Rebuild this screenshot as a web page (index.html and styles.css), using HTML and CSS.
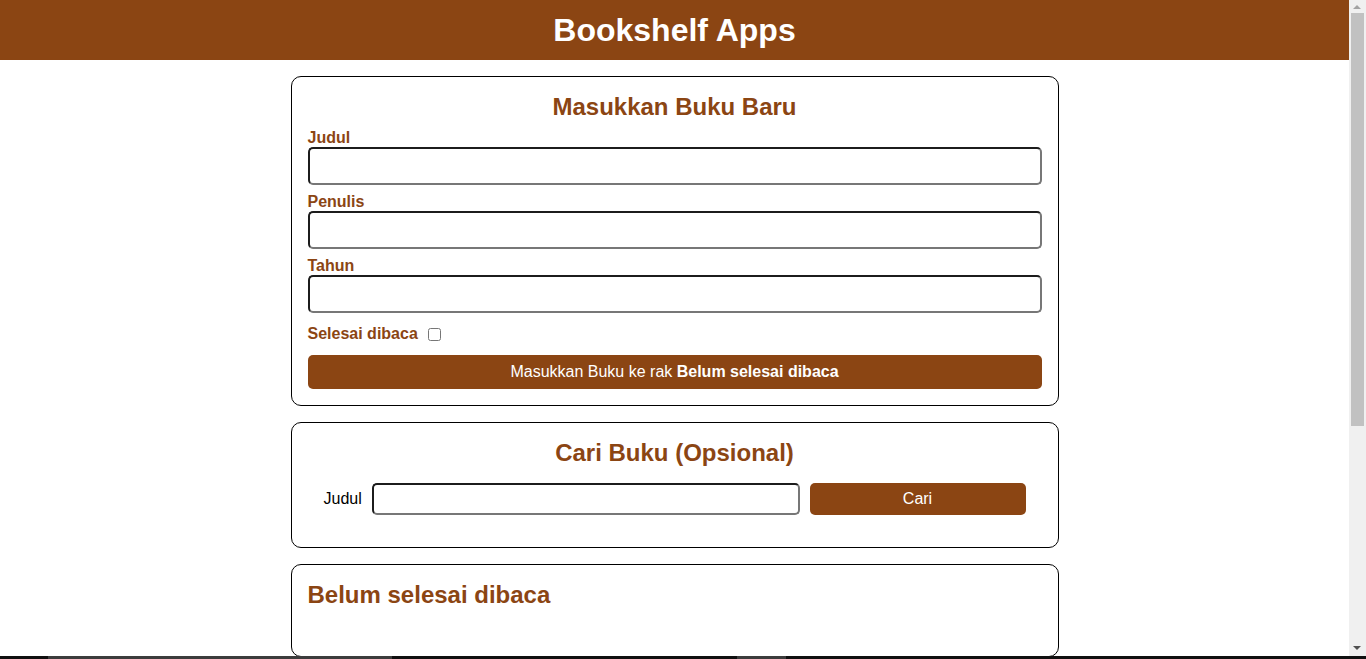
FILE: index.html
```html
<!DOCTYPE html>
<html lang="id">
<head>
<meta charset="utf-8">
<title>Bookshelf Apps</title>
<link rel="stylesheet" href="styles.css">
</head>
<body>
<div class="page">
  <header class="app-header">
    <h1>Bookshelf Apps</h1>
  </header>
  <main class="main">
    <section class="card input-section">
      <h2 class="card-title centered">Masukkan Buku Baru</h2>
      <form class="book-form">
        <div class="field">
          <label class="field-label" for="inputBookTitle">Judul</label>
          <input class="text-input" id="inputBookTitle" type="text">
        </div>
        <div class="field">
          <label class="field-label" for="inputBookAuthor">Penulis</label>
          <input class="text-input" id="inputBookAuthor" type="text">
        </div>
        <div class="field">
          <label class="field-label" for="inputBookYear">Tahun</label>
          <input class="text-input" id="inputBookYear" type="text">
        </div>
        <div class="check-row">
          <label class="field-label" for="inputBookIsComplete">Selesai dibaca</label>
          <input class="check" id="inputBookIsComplete" type="checkbox">
        </div>
        <button class="btn btn-submit" type="button">Masukkan Buku ke rak <strong>Belum selesai dibaca</strong></button>
      </form>
    </section>

    <section class="card search-section">
      <h2 class="card-title centered">Cari Buku (Opsional)</h2>
      <form class="search-form">
        <label class="search-label" for="searchBookTitle">Judul</label>
        <input class="text-input search-input" id="searchBookTitle" type="text">
        <button class="btn btn-search" type="button">Cari</button>
      </form>
    </section>

    <section class="card shelf">
      <h2 class="card-title">Belum selesai dibaca</h2>
      <div class="book-list"></div>
    </section>
  </main>
</div>
<div class="fake-scrollbar">
  <div class="sb-arrow sb-up"></div>
  <div class="sb-thumb"></div>
  <div class="sb-arrow sb-down"></div>
</div>
<div class="taskbar">
  <div class="tb-seg tb-dark" style="width:48px"></div>
  <div class="tb-seg tb-gray" style="width:344px"></div>
  <div class="tb-seg tb-dark" style="width:345px"></div>
  <div class="tb-seg tb-gray" style="width:49px"></div>
  <div class="tb-seg tb-dark tb-fill"></div>
</div>
</body>
</html>
```

FILE: styles.css
```css
html, body {
  margin: 0;
  padding: 0;
  height: 100%;
  overflow: hidden;
}

body {
  font-family: "Liberation Sans", Arial, sans-serif;
  background: #ffffff;
  color: #000;
}

.page {
  margin-right: 17px;
}

.app-header {
  background: #8b4513;
  color: #fff;
  text-align: center;
  height: 60px;
}

.app-header h1 {
  margin: 0;
  font-size: 32px;
  line-height: 60px;
  font-weight: bold;
}

.main {
  padding-top: 16px;
}

.card {
  width: 734px;
  margin: 0 auto 16px;
  border: 1px solid #000;
  border-radius: 10px;
  padding: 16px;
}

.card-title {
  margin: 0 0 8px;
  font-size: 24px;
  line-height: 28px;
  font-weight: bold;
  color: #8b4513;
}

.centered {
  text-align: center;
}

.field {
  display: flex;
  flex-direction: column;
  margin-bottom: 8px;
}

.field-label {
  font-size: 16px;
  line-height: 18px;
  font-weight: bold;
  color: #8b4513;
}

.text-input {
  box-sizing: border-box;
  height: 38px;
  border-width: 2px;
  border-style: solid;
  border-color: #1c1c1c #777777 #777777 #1c1c1c;
  border-radius: 5px;
  padding: 0 8px;
  font-family: inherit;
  font-size: 16px;
  background: #fff;
  margin: 0;
}

.check-row {
  display: flex;
  align-items: center;
  height: 26px;
  margin-bottom: 8px;
}

.check {
  width: 13px;
  height: 13px;
  margin: 0 0 0 10px;
}

.btn {
  display: block;
  box-sizing: border-box;
  border: none;
  border-radius: 5px;
  background: #8b4513;
  color: #fff;
  font-family: inherit;
  font-size: 16px;
  cursor: pointer;
}

.btn-submit {
  width: 100%;
  height: 34px;
}

.search-section .card-title {
  margin-bottom: 16px;
}

.search-form {
  display: flex;
  align-items: center;
  padding: 0 16px 16px;
}

.search-label {
  font-size: 16px;
  margin-right: 8px;
  width: 40px;
}

.search-input {
  flex: 2 1 0;
  min-width: 0;
  height: 32px;
}

.btn-search {
  flex: 1 1 0;
  height: 32px;
  margin-left: 10px;
}

.shelf .card-title {
  margin-bottom: 0;
}

.book-list {
  min-height: 31px;
}

.fake-scrollbar {
  position: fixed;
  top: 0;
  right: 0;
  width: 17px;
  height: 100%;
  background: #f0f0f0;
}

.sb-thumb {
  position: absolute;
  left: 2px;
  top: 13px;
  width: 13px;
  height: 413px;
  background: #c1c1c1;
}

.sb-arrow {
  position: absolute;
  left: 4px;
  width: 0;
  height: 0;
  border-left: 4px solid transparent;
  border-right: 4px solid transparent;
}

.sb-up {
  top: 5px;
  border-bottom: 4px solid #a3a3a3;
}

.sb-down {
  bottom: 9px;
  border-top: 4px solid #505050;
}

.taskbar {
  position: fixed;
  left: 0;
  right: 0;
  bottom: 0;
  height: 3px;
  display: flex;
}

.tb-dark {
  background: #101010;
}

.tb-gray {
  background: #3c3c3c;
}

.tb-fill {
  flex: 1;
}
```
